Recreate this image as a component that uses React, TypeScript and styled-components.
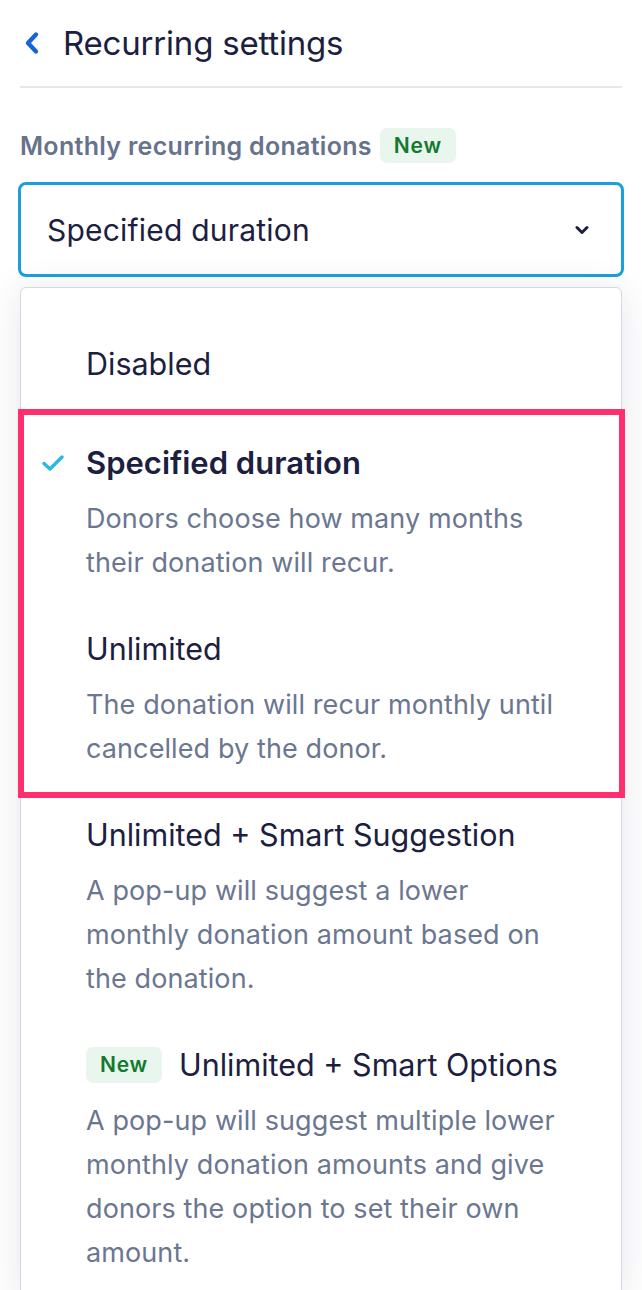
import React from "react";
import styled, { createGlobalStyle } from "styled-components";

const GlobalStyle = createGlobalStyle`
  html, body {
    margin: 0;
    padding: 0;
    background: #ffffff;
  }
  body {
    font-family: Inter, "Noto Sans", "Liberation Sans", sans-serif;
    color: #1c2040;
    -webkit-font-smoothing: antialiased;
  }
`;

const Page = styled.div`
  padding: 0 20px;
  overflow: hidden;
  height: 1290px;
  box-sizing: border-box;
`;

const Header = styled.header`
  display: flex;
  align-items: center;
  height: 86px;
  border-bottom: 2px solid #e4e7ec;
`;

const BackButton = styled.button`
  display: flex;
  align-items: center;
  justify-content: center;
  width: 24px;
  height: 40px;
  margin: 0 19px 0 0;
  padding: 0;
  border: 0;
  background: none;
  color: #1565d8;
`;

const Title = styled.h1`
  margin: 0;
  font-size: 33px;
  font-weight: 400;
  letter-spacing: -0.2px;
  color: #1c2040;
`;

const LabelRow = styled.div`
  display: flex;
  align-items: center;
  gap: 8px;
  margin-top: 40px;
  height: 35px;
`;

const Label = styled.span`
  font-size: 25px;
  font-weight: 600;
  letter-spacing: 0.3px;
  color: #67728c;
`;

const Badge = styled.span<{ $size?: number }>`
  display: inline-flex;
  align-items: center;
  justify-content: center;
  box-sizing: border-box;
  width: 76px;
  height: ${(p) => p.$size ?? 35}px;
  border-radius: 7px;
  background: #e8f6ed;
  color: #137a2d;
  font-size: 21px;
  font-weight: 600;
  letter-spacing: 0.8px;
  flex-shrink: 0;
`;

const Select = styled.div`
  display: flex;
  align-items: center;
  justify-content: space-between;
  box-sizing: border-box;
  height: 95px;
  margin: 19px -2px 0;
  padding: 0 32px 0 26px;
  border: 3px solid #1ba0dc;
  border-radius: 8px;
  font-size: 30px;
  letter-spacing: 0.2px;
  color: #1c2040;
`;

const Panel = styled.div`
  margin-top: 10px;
  padding-top: 33px;
  border: 1px solid #d3d8e2;
  border-radius: 6px;
  background: #ffffff;
  box-shadow: 0 4px 36px rgba(40, 50, 80, 0.12);
`;

const Highlight = styled.div`
  position: relative;
  padding-top: 13px;

  &::after {
    content: "";
    position: absolute;
    top: 2px;
    bottom: -6px;
    left: -3px;
    right: -4px;
    border: 6px solid #ff2e6c;
    pointer-events: none;
  }
`;

const Item = styled.div`
  display: grid;
  grid-template-columns: 65px 1fr;
  padding: 21px 56px 21px 0;
`;

const Marker = styled.div`
  display: flex;
  align-items: center;
  height: 44px;
  padding-left: 21px;
  color: #2bb7e6;
`;

const ItemTitle = styled.div<{ $selected?: boolean }>`
  display: flex;
  align-items: center;
  gap: 17px;
  font-size: ${(p) => (p.$selected ? 31 : 30.5)}px;
  line-height: 44px;
  font-weight: ${(p) => (p.$selected ? 600 : 400)};
  white-space: nowrap;
  color: #1c2040;
`;

const ItemDesc = styled.div`
  grid-column: 2;
  margin-top: 12px;
  font-size: 27px;
  line-height: 44px;
  letter-spacing: 0.1px;
  color: #6b7690;
`;

type Option = {
  title: string;
  desc?: string;
  selected?: boolean;
  isNew?: boolean;
};

const options: Option[] = [
  { title: "Disabled" },
  {
    title: "Specified duration",
    desc: "Donors choose how many months their donation will recur.",
    selected: true,
  },
  {
    title: "Unlimited",
    desc: "The donation will recur monthly until cancelled by the donor.",
  },
  {
    title: "Unlimited + Smart Suggestion",
    desc: "A pop-up will suggest a lower monthly donation amount based on the donation.",
  },
  {
    title: "Unlimited + Smart Options",
    desc: "A pop-up will suggest multiple lower monthly donation amounts and give donors the option to set their own amount.",
    isNew: true,
  },
];

function OptionRow({ option }: { option: Option }) {
  return (
    <Item>
      <Marker>
        {option.selected && (
          <svg width="22" height="16" viewBox="0 0 22 16" fill="none">
            <path
              d="M2 8.5 L8 14 L20 2"
              stroke="currentColor"
              strokeWidth="3.4"
              strokeLinecap="round"
              strokeLinejoin="round"
            />
          </svg>
        )}
      </Marker>
      <ItemTitle $selected={option.selected}>
        {option.isNew && <Badge $size={36}>New</Badge>}
        {option.title}
      </ItemTitle>
      {option.desc && <ItemDesc>{option.desc}</ItemDesc>}
    </Item>
  );
}

export default function App() {
  const [first, second, third, ...rest] = options;
  return (
    <Page>
      <GlobalStyle />
      <Header>
        <BackButton aria-label="Back">
          <svg width="16" height="24" viewBox="0 0 16 24" fill="none">
            <path
              d="M12 3.5 L4 12 L12 20.5"
              stroke="currentColor"
              strokeWidth="4.4"
              strokeLinecap="round"
              strokeLinejoin="round"
            />
          </svg>
        </BackButton>
        <Title>Recurring settings</Title>
      </Header>

      <LabelRow>
        <Label>Monthly recurring donations</Label>
        <Badge>New</Badge>
      </LabelRow>

      <Select>
        <span>Specified duration</span>
        <svg width="14" height="10" viewBox="0 0 14 10" fill="none">
          <path
            d="M2 2.5 L7 7.5 L12 2.5"
            stroke="#1c2040"
            strokeWidth="3"
            strokeLinecap="round"
            strokeLinejoin="round"
          />
        </svg>
      </Select>

      <Panel>
        <OptionRow option={first} />
        <Highlight>
          <OptionRow option={second} />
          <OptionRow option={third} />
        </Highlight>
        {rest.map((o) => (
          <OptionRow key={o.title} option={o} />
        ))}
      </Panel>
    </Page>
  );
}
